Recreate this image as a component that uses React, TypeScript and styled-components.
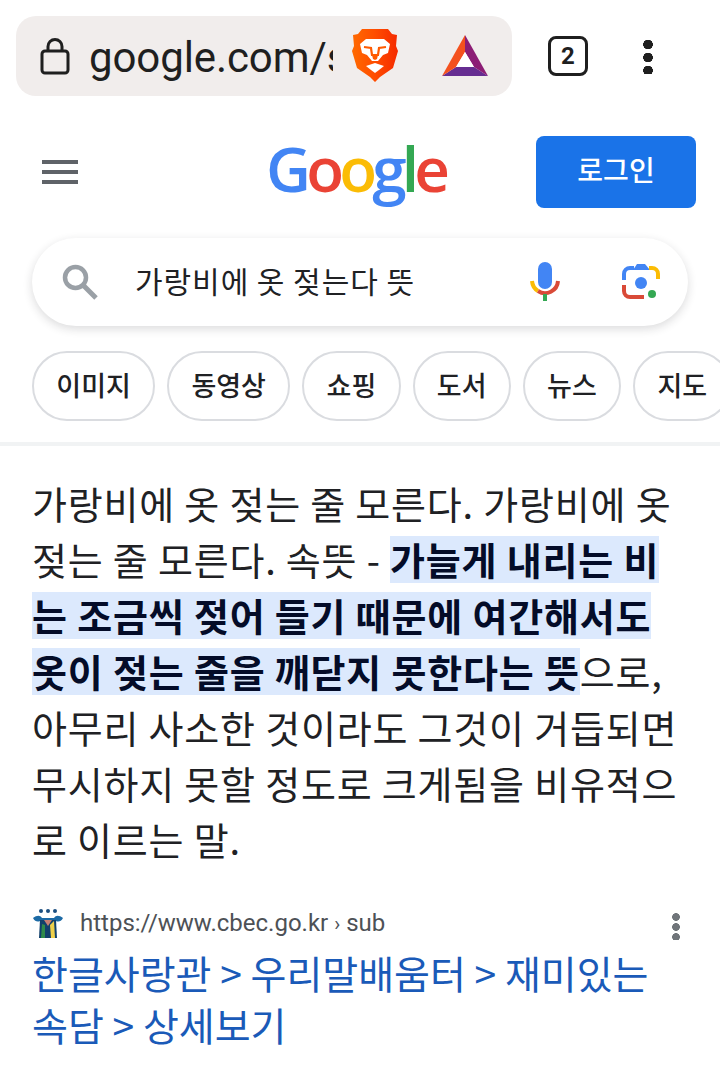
import styled, { createGlobalStyle } from "styled-components";

const GlobalStyle = createGlobalStyle`
    html, body {
        margin: 0;
        padding: 0;
        background: #fff;
    }
    body {
        font-family: "Noto Sans CJK KR", Roboto, sans-serif;
    }
`;

const chips = ["이미지", "동영상", "쇼핑", "도서", "뉴스", "지도"];

function App() {
    return (
        <Page>
            <GlobalStyle />
            <BrowserBar>
                <UrlPill>
                    <LockIcon />
                    <UrlText>google.com/s</UrlText>
                    <BraveIcon />
                    <BatIcon />
                </UrlPill>
                <TabCount>2</TabCount>
                <MenuDots $size={10} $gap={3} $color="#1f1f1f" />
            </BrowserBar>

            <Header>
                <Hamburger>
                    <span />
                    <span />
                    <span />
                </Hamburger>
                <Logo>
                    <Letter $color="#4285f4">G</Letter>
                    <Letter $color="#ea4335">o</Letter>
                    <Letter $color="#fbbc05">o</Letter>
                    <Letter $color="#4285f4">g</Letter>
                    <Letter $color="#34a853">l</Letter>
                    <Letter $color="#ea4335">e</Letter>
                </Logo>
                <LoginButton>로그인</LoginButton>
            </Header>

            <SearchBox>
                <SearchIcon />
                <Query>가랑비에 옷 젖는다 뜻</Query>
                <MicIcon />
                <LensIcon />
            </SearchBox>

            <ChipRow>
                {chips.map((chip) => (
                    <Chip key={chip}>{chip}</Chip>
                ))}
            </ChipRow>

            <Divider />

            <Snippet>
                가랑비에 옷 젖는 줄 모른다. 가랑비에 옷
                <br />
                젖는 줄 모른다. 속뜻 - <Mark>가늘게 내리는 비</Mark>
                <br />
                <Mark>는 조금씩 젖어 들기 때문에 여간해서도</Mark>
                <br />
                <Mark>옷이 젖는 줄을 깨닫지 못한다는 뜻</Mark>으로,
                <br />
                아무리 사소한 것이라도 그것이 거듭되면
                <br />
                무시하지 못할 정도로 크게됨을 비유적으
                <br />
                로 이르는 말.
            </Snippet>

            <Result>
                <SourceRow>
                    <Favicon />
                    <SourceUrl>
                        https://www.cbec.go.kr <Crumb>›</Crumb> sub
                    </SourceUrl>
                    <MenuDots $size={8} $gap={2} $color="#70757a" />
                </SourceRow>
                <ResultLink>
                    한글사랑관 &gt; 우리말배움터 &gt; 재미있는
                    <br />
                    속담 &gt; 상세보기
                </ResultLink>
            </Result>
        </Page>
    );
}

export default App;

function LockIcon() {
    return (
        <LockSvg viewBox="0 0 30 38" fill="none" stroke="#1f1f1f" strokeWidth="3">
            <rect x="2" y="14" width="26" height="22" rx="3" />
            <path d="M8 14V9.5a7 7 0 0 1 14 0V14" />
        </LockSvg>
    );
}

function BraveIcon() {
    return (
        <BraveSvg viewBox="0 0 46 54">
            <defs>
                <linearGradient id="braveGrad" x1="0" y1="0" x2="1" y2="0">
                    <stop offset="0" stopColor="#ff6a00" />
                    <stop offset="0.5" stopColor="#ff4d00" />
                    <stop offset="1" stopColor="#f52a00" />
                </linearGradient>
            </defs>
            <path
                d="M10 0h26l4 5 5 1-1 11 2 5-5 17-13 9-5 5-5-5-13-9L0 22l2-5L1 6l5-1z"
                fill="url(#braveGrad)"
            />
            <path
                d="M14 10h18l6 5-2 9-5 2-5 6h-6l-5-6-5-2-2-9z"
                fill="#fff"
            />
            <path
                d="M12 18l7 1 1 7h6l1-7 7-1"
                fill="none"
                stroke="#ff5a00"
                strokeWidth="2.2"
            />
            <path d="M20 26h6l-1 4-2 1-2-1z" fill="#ff5a00" />
            <path d="M14 37l9-3 9 3-5 4-4 3-4-3z" fill="#fff" />
        </BraveSvg>
    );
}

function BatIcon() {
    return (
        <BatSvg viewBox="0 0 46 42">
            <path d="M0 41h46L32 32H14z" fill="#662d91" />
            <path d="M23 0L0 41l14-9 9-15z" fill="#f4511e" />
            <path d="M23 0l23 41-14-9-9-15z" fill="#8c1d75" />
            <path d="M23 17l-9 15h18z" fill="#fff" />
        </BatSvg>
    );
}

function SearchIcon() {
    return (
        <SearchSvg viewBox="0 0 36 36" fill="none" stroke="#9aa0a6">
            <circle cx="13.5" cy="13.5" r="10.5" strokeWidth="4.5" />
            <path d="M21 21l13 13" strokeWidth="5" />
        </SearchSvg>
    );
}

function MicIcon() {
    return (
        <MicSvg viewBox="0 0 30 40">
            <rect x="8" y="0" width="14" height="27" rx="7" fill="#4285f4" />
            <path d="M2 19a13 13 0 0 0 6 10" fill="none" stroke="#fbbc04" strokeWidth="4" />
            <path d="M8 29a13 13 0 0 0 20-10" fill="none" stroke="#d94a38" strokeWidth="4" />
            <rect x="13" y="32" width="4" height="7" fill="#34a853" />
        </MicSvg>
    );
}

function LensIcon() {
    return (
        <LensSvg viewBox="0 0 38 38" fill="none" strokeWidth="4">
            <path d="M2 17v-6a6 6 0 0 1 6-6h4" stroke="#4285f4" />
            <path d="M11 7l4-6h8l5 6z" fill="#4285f4" />
            <path d="M27 5h3a6 6 0 0 1 6 6v5" stroke="#fbbc04" />
            <path d="M2 22v6a6 6 0 0 0 6 6h14" stroke="#d94a38" />
            <circle cx="19" cy="20" r="6" fill="#4285f4" />
            <circle cx="30" cy="31" r="4" fill="#34a853" />
        </LensSvg>
    );
}

function Favicon() {
    return (
        <FaviconSvg viewBox="0 0 32 30">
            <circle cx="9" cy="3" r="2" fill="#1c4f80" />
            <circle cx="16" cy="3" r="2" fill="#1c4f80" />
            <circle cx="23" cy="3" r="2" fill="#1c4f80" />
            <path d="M1 10c4-3 7-3 9 0h12c2-3 5-3 9 0-2 4-5 4-7 3l-1 4H9l-1-4c-2 1-5 1-7-3z" fill="#1c6aa5" />
            <path d="M8 12h16l1 18H7z" fill="#12406b" />
            <path d="M12 12h8l-4 6z" fill="#c98074" />
            <path d="M10 16l3 1v13h-4z" fill="#2f8a4a" />
            <path d="M22 13l1 17h-4l-1-13z" fill="#efd04a" />
        </FaviconSvg>
    );
}

const Page = styled.div`
    width: 720px;
    height: 1072px;
    overflow: hidden;
    background: #fff;
`;

const BrowserBar = styled.div`
    display: flex;
    align-items: center;
    padding: 16px 0 0 16px;
`;

const UrlPill = styled.div`
    display: flex;
    align-items: center;
    width: 496px;
    height: 80px;
    box-sizing: border-box;
    padding: 0 24px;
    background: #f1edec;
    border-radius: 20px;
`;

const LockSvg = styled.svg`
    width: 30px;
    height: 38px;
    flex: none;
`;

const UrlText = styled.div`
    width: 244px;
    margin: 3px 0 0 19px;
    overflow: hidden;
    white-space: nowrap;
    font-family: Roboto, sans-serif;
    font-size: 42px;
    letter-spacing: -0.1px;
    color: #1f1f1f;
`;

const BraveSvg = styled.svg`
    width: 46px;
    height: 54px;
    flex: none;
    margin-left: 19px;
`;

const BatSvg = styled.svg`
    width: 46px;
    height: 42px;
    flex: none;
    margin-left: 44px;
`;

const TabCount = styled.div`
    width: 40px;
    height: 40px;
    box-sizing: border-box;
    margin-left: 36px;
    display: flex;
    align-items: center;
    justify-content: center;
    border: 3px solid #1f1f1f;
    border-radius: 8px;
    font-family: "Liberation Sans Narrow", Roboto, sans-serif;
    font-size: 24px;
    font-weight: 700;
    color: #1f1f1f;
`;

const MenuDots = styled.div<{ $size: number; $gap: number; $color: string }>`
    flex: none;
    width: ${(p) => p.$size}px;
    height: ${(p) => p.$size * 3 + p.$gap * 2}px;
    margin-left: 55px;
    background: radial-gradient(circle closest-side, ${(p) => p.$color} 92%, transparent 100%)
        0 0 / ${(p) => p.$size}px ${(p) => p.$size + p.$gap}px repeat-y;
`;

const Header = styled.div`
    display: flex;
    align-items: center;
    height: 72px;
    margin-top: 40px;
    padding: 0 24px 0 42px;
`;

const Hamburger = styled.div`
    display: flex;
    flex-direction: column;
    gap: 6px;
    width: 36px;

    span {
        display: block;
        height: 4px;
        background: #5f6368;
    }
`;

const Logo = styled.div`
    width: 180px;
    margin: 0 0 9px 188px;
    font-family: "Open Sans", sans-serif;
    font-size: 62px;
    font-weight: 600;
    line-height: 72px;
    letter-spacing: -4.8px;
    white-space: nowrap;
`;

const Letter = styled.span<{ $color: string }>`
    color: ${(p) => p.$color};
`;

const LoginButton = styled.div`
    width: 160px;
    height: 72px;
    box-sizing: border-box;
    padding-bottom: 6px;
    margin-left: auto;
    display: flex;
    align-items: center;
    justify-content: center;
    background: #1a73e8;
    border-radius: 8px;
    color: #fff;
    font-size: 28px;
    font-weight: 500;
`;

const SearchBox = styled.div`
    display: flex;
    align-items: center;
    width: 656px;
    height: 88px;
    box-sizing: border-box;
    margin: 30px 0 0 32px;
    padding: 0 28px 0 30px;
    background: #fff;
    border-radius: 44px;
    box-shadow: 0 3px 10px rgba(32, 33, 36, 0.16);
`;

const SearchSvg = styled.svg`
    width: 36px;
    height: 36px;
    flex: none;
`;

const Query = styled.div`
    flex: 1;
    margin: 0 0 4px 37px;
    font-size: 30px;
    letter-spacing: 0.95px;
    color: #202124;
`;

const MicSvg = styled.svg`
    width: 30px;
    height: 40px;
    flex: none;
`;

const LensSvg = styled.svg`
    width: 38px;
    height: 38px;
    flex: none;
    margin-left: 62px;
`;

const ChipRow = styled.div`
    display: flex;
    gap: 12px;
    margin: 25px 0 0 32px;
    overflow: hidden;
`;

const Chip = styled.div`
    flex: none;
    height: 70px;
    box-sizing: border-box;
    padding: 0 22.3px 4px;
    display: flex;
    align-items: center;
    border: 2px solid #dadce0;
    border-radius: 35px;
    background: #fff;
    color: #202124;
    font-size: 27px;
    font-weight: 500;
`;

const Divider = styled.div`
    height: 4px;
    margin-top: 21px;
    background: #f1f3f4;
`;

const Snippet = styled.div`
    margin-top: 29px;
    padding-left: 32px;
    font-size: 38px;
    letter-spacing: 0.8px;
    line-height: 56px;
    color: #202124;
    white-space: nowrap;
`;

const Mark = styled.span`
    background: linear-gradient(
        transparent 5px,
        #dce9fd 5px,
        #dce9fd 52px,
        transparent 52px
    );
    color: #040c28;
    font-weight: 700;
`;

const Result = styled.div`
    margin-top: 38px;
    padding: 0 0 0 32px;
`;

const SourceRow = styled.div`
    display: flex;
    align-items: center;
    height: 36px;

    ${MenuDots} {
        margin: 6px 40px 0 auto;
    }
`;

const FaviconSvg = styled.svg`
    width: 32px;
    height: 30px;
    flex: none;
`;

const SourceUrl = styled.div`
    margin-left: 16px;
    font-family: Roboto, sans-serif;
    font-size: 24px;
    color: #4d5156;
`;

const Crumb = styled.span`
    font-size: 20px;
`;

const ResultLink = styled.div`
    margin-top: 5px;
    font-size: 39px;
    line-height: 52px;
    color: #1a5ab8;
    white-space: nowrap;
`;
